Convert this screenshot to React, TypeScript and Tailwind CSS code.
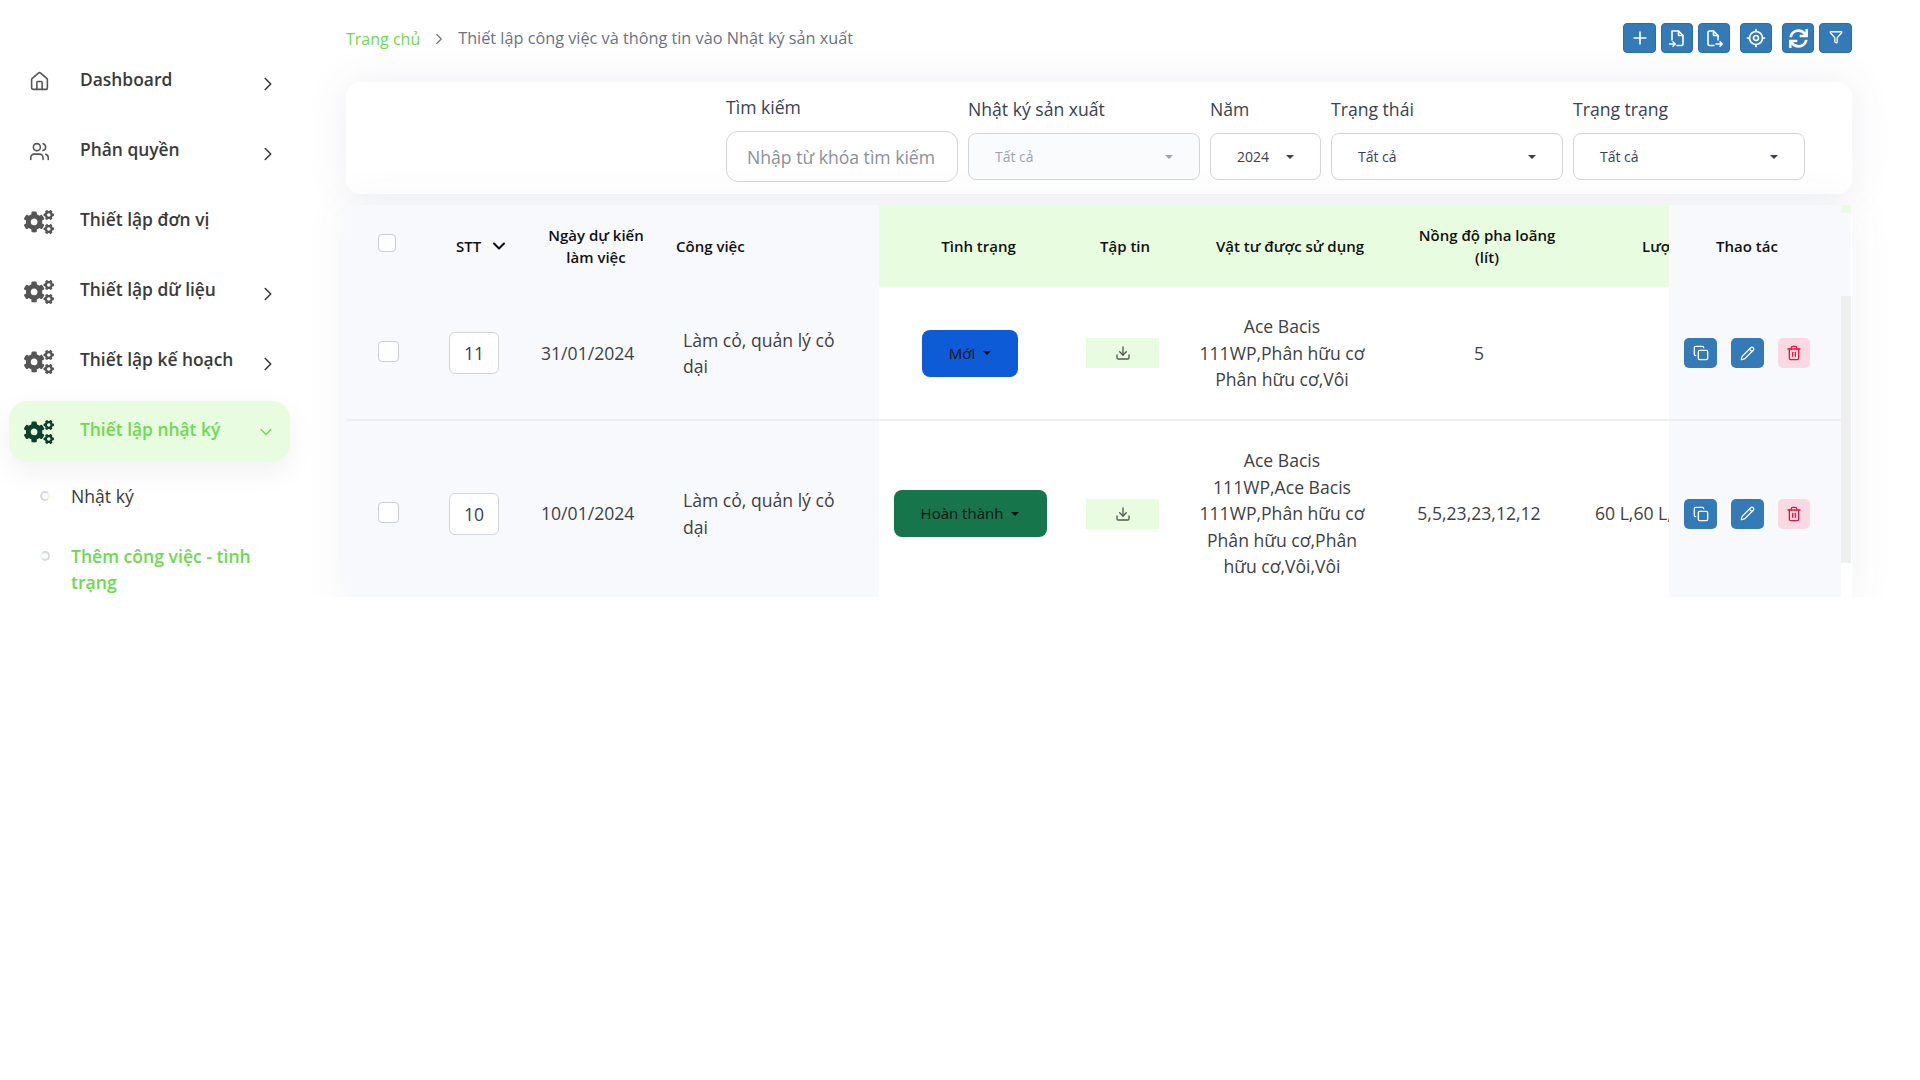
import { ChevronDown, ChevronRight, Copy, Download, Funnel, House, Pencil, Plus, Trash2, Users } from "lucide-react"
import { FaCogs, FaSync } from "react-icons/fa"
import type { ReactNode } from "react"

function NavItem({ icon, label, arrow = true, active = false }: { icon: ReactNode; label: string; arrow?: boolean; active?: boolean }) {
  return (
    <div
      className={
        active
          ? "flex items-center mt-[9px] w-[281px] h-[61px] rounded-[18px] bg-[#e8fddf] shadow-[0_10px_30px_rgba(0,0,0,0.06)]"
          : "flex items-center mt-[9px] w-[281px] h-[61px] rounded-[18px]"
      }
    >
      <div className={active ? "w-[60px] mr-[11px] flex justify-center text-[#0c3f2c]" : "w-[60px] mr-[11px] flex justify-center text-[#555555]"}>
        {icon}
      </div>
      <span className={active ? "flex-1 -mt-[4px] text-[17.4px] font-semibold text-[#6dd94f]" : "flex-1 -mt-[4px] text-[17.4px] font-semibold text-[#3a3a3a]"}>{label}</span>
      {active ? (
        <ChevronDown size={20} strokeWidth={1.5} className="mr-[14px] text-[#6dd94f]" />
      ) : arrow ? (
        <ChevronRight size={22} strokeWidth={1.6} className="mr-[11px] mt-[5px] text-[#333333]" />
      ) : null}
    </div>
  )
}

function TopButton({ children, wide = false }: { children: ReactNode; wide?: boolean }) {
  return (
    <button className={wide ? "w-[33px] h-[30px] rounded-[4px] bg-[#337ab7] border border-[#2e6da4] text-white flex items-center justify-center" : "w-[32px] h-[30px] rounded-[4px] bg-[#337ab7] border border-[#2e6da4] text-white flex items-center justify-center"}>
      {children}
    </button>
  )
}

// page with an arrow along its lower edge, left or right
function FileArrow({ side }: { side: "left" | "right" }) {
  return (
    <svg width="20" height="20" viewBox="0 0 20 20" fill="none" stroke="currentColor" strokeWidth="1.6" strokeLinecap="round" strokeLinejoin="round">
      {side === "left" ? (
        <>
          <path d="M5 12V3h6.5L16 7.5V16a1.5 1.5 0 0 1-1.5 1.5H10" />
          <path d="M11.5 3v4.5H16" />
          <path d="M2.5 16H8M6 13.8 8.2 16 6 18.2" />
        </>
      ) : (
        <>
          <path d="M14 12V7.5L9.5 3H5.5A1.5 1.5 0 0 0 4 4.500V16a1.500 1.500 0 0 0 1.500 1.500H10" />
          <path d="M9.500 3v4.500H14" />
          <path d="M12 16h6M16 13.800 18.200 16 16 18.200" />
        </>
      )}
    </svg>
  )
}

function Target() {
  return (
    <svg width="20" height="20" viewBox="0 0 20 20" fill="none" stroke="currentColor" strokeWidth="1.7" strokeLinecap="round">
      <circle cx="10" cy="10" r="6.500" />
      <circle cx="10" cy="10" r="2.500" />
      <path d="M10 1.500v2M10 16.500v2M1.500 10h2M16.500 10h2" />
    </svg>
  )
}

function Select({ label, value, width, disabled = false }: { label: string; value: string; width: string; disabled?: boolean }) {
  return (
    <div className={width}>
      <div className="text-[17.6px] leading-[26px] text-[#374151] mb-[11px]">{label}</div>
      <div className={`h-[47px] border border-[#d1d5db] rounded-[8px] flex items-center justify-between pl-[26px] pr-[26px] ${disabled ? "bg-[#fafbfc] text-[#9ca3af]" : "bg-white text-[#374151]"}`}>
        <span className="text-[14px]">{value}</span>
        <span className={disabled ? "w-0 h-0 border-x-[4px] border-x-transparent border-t-[4px] border-t-[#9ca3af]" : "w-0 h-0 border-x-[4px] border-x-transparent border-t-[4px] border-t-[#374151]"} />
      </div>
    </div>
  )
}

function Actions() {
  return (
    <div className="w-[172px] shrink-0 sticky right-0 bg-[#f8f9fd] flex items-center pl-[15px] gap-[14px]">
      <button className="w-[33px] h-[30px] rounded-[5px] bg-[#337ab7] text-white flex items-center justify-center">
        <Copy size={16} />
      </button>
      <button className="w-[33px] h-[30px] rounded-[5px] bg-[#337ab7] text-white flex items-center justify-center">
        <Pencil size={15} />
      </button>
      <button className="w-[32px] h-[30px] rounded-[5px] bg-[#fbd9e2] text-[#e3173e] flex items-center justify-center">
        <Trash2 size={16} />
      </button>
    </div>
  )
}

function Row({ stt, date, button, material, conc, amount, height }: { stt: string; date: string; button: ReactNode; material: string; conc: string; amount: string; height: string }) {
  return (
    <div className={`flex w-[1700px] ${height} border-b-2 border-[#f0f0f0] text-[17.6px] leading-[26.4px] text-[#3f4043]`}>
      <div className="w-[86px] shrink-0 bg-[#f8f9fd] flex items-center pl-[32px] pb-[3px]">
        <input type="checkbox" className="appearance-none w-[21px] h-[21px] rounded-[4px] bg-white border border-[#c8ccd4]" />
      </div>
      <div className="w-[84px] shrink-0 bg-[#f8f9fd] flex items-center justify-center">
        <input readOnly value={stt} className="w-[50px] h-[42px] rounded-[6px] bg-white border border-[#d1d5db] text-center text-[#374151]" />
      </div>
      <div className="w-[160px] shrink-0 bg-[#f8f9fd] flex items-center pl-[25px]">{date}</div>
      <div className="w-[203px] shrink-0 bg-[#f8f9fd] flex items-center pl-[7px] pr-[30px]">Làm cỏ, quản lý cỏ dại</div>
      <div className="w-[199px] shrink-0 flex items-center justify-center pr-[17px]">{button}</div>
      <div className="w-[94px] shrink-0 flex items-center pl-[8px]">
        <div className="w-[73px] h-[30px] bg-[#e8fddf] flex items-center justify-center text-[#555555]">
          <Download size={16} />
        </div>
      </div>
      <div className="w-[236px] shrink-0 flex items-center justify-center pr-[16px]">
        <div className="w-[166px] text-center">{material}</div>
      </div>
      <div className="w-[158px] shrink-0 flex items-center justify-center pr-[16px]">{conc}</div>
      <div className="flex-1 flex items-center pl-[29px] whitespace-nowrap">{amount}</div>
      <Actions />
    </div>
  )
}

export default function App() {
  const th = "shrink-0 flex items-center justify-center text-center text-[15px] leading-[22px] font-semibold text-[#111111]"
  return (
    <div className="flex h-[597px] overflow-hidden bg-white" style={{ fontFamily: '"Open Sans", sans-serif' }}>
      {/* Sidebar */}
      <aside className="w-[300px] shrink-0 pt-[42px] pl-[9px]">
        <NavItem icon={<House size={21} strokeWidth={1.8} />} label="Dashboard" />
        <NavItem icon={<Users size={21} strokeWidth={1.8} />} label="Phân quyền" />
        <NavItem icon={<FaCogs size={30} />} label="Thiết lập đơn vị" arrow={false} />
        <NavItem icon={<FaCogs size={30} />} label="Thiết lập dữ liệu" />
        <NavItem icon={<FaCogs size={30} />} label="Thiết lập kế hoạch" />
        <NavItem icon={<FaCogs size={30} />} label="Thiết lập nhật ký" active />
        <div className="flex items-start mt-[21px] pl-[31px] text-[17.6px] leading-[26px] text-[#3a3a3a]">
          <span className="w-[10px] h-[10px] mt-[8px] mr-[21px] rounded-full border-2 border-[#d5d9e5] border-r-[#e8fddf]" />
          Nhật ký
        </div>
        <div className="flex items-start mt-[34px] pl-[31px] w-[281px] text-[17.6px] leading-[26px] font-semibold text-[#6dd94f]">
          <span className="w-[10px] h-[10px] shrink-0 mt-[8px] mr-[21px] rounded-full border-2 border-[#d5d9e5] border-l-[#e8fddf]" />
          <span>Thêm công việc - tình trạng</span>
        </div>
      </aside>

      {/* Main */}
      <main className="flex-1 min-w-0 pl-[46px] pr-[68px]">
        <div className="flex items-center justify-between h-[30px] mt-[23px]">
          <div className="flex items-center text-[16px] mt-[1px]">
            <span className="text-[#6dd94f]">Trang chủ</span>
            <ChevronRight size={18} strokeWidth={1.5} className="mx-[10px] text-[#6b7280]" />
            <span className="text-[16.25px] text-[#6b7280]">Thiết lập công việc và thông tin vào Nhật ký sản xuất</span>
          </div>
          <div className="flex items-center">
            <TopButton wide><Plus size={20} /></TopButton>
            <div className="ml-[5px]"><TopButton><FileArrow side="left" /></TopButton></div>
            <div className="ml-[5px]"><TopButton><FileArrow side="right" /></TopButton></div>
            <div className="ml-[10px]"><TopButton><Target /></TopButton></div>
            <div className="ml-[10px]"><TopButton><FaSync size={19} /></TopButton></div>
            <div className="ml-[5px]"><TopButton wide><Funnel size={14} strokeWidth={2.2} className="-mt-[2px]" /></TopButton></div>
          </div>
        </div>

        {/* Filter card */}
        <div className="mt-[29px] h-[112px] bg-white rounded-[14px] shadow-[0_0_40px_rgba(76,87,125,0.1)] flex justify-end gap-[10px] pr-[47px] pt-[13px]">
          <div className="w-[232px]">
            <div className="text-[17.6px] leading-[26px] text-[#374151] mb-[11px] -mt-[1px]">Tìm kiếm</div>
            <input
              placeholder="Nhập từ khóa tìm kiếm"
              className="w-full h-[51px] px-[20px] rounded-[12px] border border-[#d1d5db] text-[17.6px] placeholder:text-[#8a9099]"
            />
          </div>
          <Select label="Nhật ký sản xuất" value="Tất cả" width="w-[232px] mt-[1px]" disabled />
          <Select label="Năm" value="2024" width="w-[111px] mt-[1px]" />
          <Select label="Trạng thái" value="Tất cả" width="w-[232px] mt-[1px]" />
          <Select label="Trạng trạng" value="Tất cả" width="w-[232px] mt-[1px]" />
        </div>

        {/* Table */}
        <div className="mt-[11px] flex shadow-[0_0_40px_rgba(76,87,125,0.08)]">
          <div className="w-[1495px] overflow-hidden">
            <div className="flex w-[1700px] h-[82px]">
              <div className="w-[86px] shrink-0 bg-[#f8f9fd] flex pl-[32px] pt-[29px]">
                <input type="checkbox" className="appearance-none w-[18px] h-[18px] rounded-[4px] bg-white border border-[#c8ccd4]" />
              </div>
              <div className={`${th} w-[84px] bg-[#f8f9fd] gap-[8px] pl-[24px] !justify-start`}>
                STT <ChevronDown size={20} strokeWidth={2.5} />
              </div>
              <div className={`${th} w-[160px] bg-[#f8f9fd] px-[30px]`}>Ngày dự kiến làm việc</div>
              <div className={`${th} w-[203px] bg-[#f8f9fd] !justify-start`}>Công việc</div>
              <div className={`${th} w-[199px] bg-[#e8fddf]`}>Tình trạng</div>
              <div className={`${th} w-[94px] bg-[#e8fddf]`}>Tập tin</div>
              <div className={`${th} w-[236px] bg-[#e8fddf]`}>Vật tư được sử dụng</div>
              <div className={`${th} w-[158px] bg-[#e8fddf]`}>Nồng độ pha loãng (lít)</div>
              <div className={`${th} flex-1 bg-[#e8fddf] !justify-start pl-[76px] whitespace-nowrap overflow-hidden`}>Lượng</div>
              <div className={`${th} w-[172px] sticky right-0 bg-[#f8f9fd] pr-[16px]`}>Thao tác</div>
            </div>
            <Row
              stt="11"
              date="31/01/2024"
              height="h-[134px]"
              button={
                <button className="w-[96px] h-[47px] rounded-[8px] bg-[#0d5bd7] text-[15px] text-[#111111] flex items-center justify-center gap-[8px]">
                  Mới <span className="w-0 h-0 border-x-[4px] border-x-transparent border-t-[4px] border-t-[#111111]" />
                </button>
              }
              material="Ace Bacis 111WP,Phân hữu cơ Phân hữu cơ,Vôi"
              conc="5"
              amount=""
            />
            <Row
              stt="10"
              date="10/01/2024"
              height="h-[187px]"
              button={
                <button className="w-[153px] h-[47px] rounded-[8px] bg-[#16754b] text-[15px] text-[#111111] flex items-center justify-center gap-[8px]">
                  Hoàn thành <span className="w-0 h-0 border-x-[4px] border-x-transparent border-t-[4px] border-t-[#111111]" />
                </button>
              }
              material="Ace Bacis 111WP,Ace Bacis 111WP,Phân hữu cơ Phân hữu cơ,Phân hữu cơ,Vôi,Vôi"
              conc="5,5,23,23,12,12"
              amount="60 L,60 L,60 L"
            />
          </div>
          {/* Scrollbar */}
          <div className="w-[10px] flex flex-col">
            <div className="h-[8px] bg-[#e8fddf]" />
            <div className="h-[83px] bg-[#f8f9fd]" />
            <div className="h-[267px] bg-[#eeeeee]" />
          </div>
        </div>
      </main>
    </div>
  )
}
